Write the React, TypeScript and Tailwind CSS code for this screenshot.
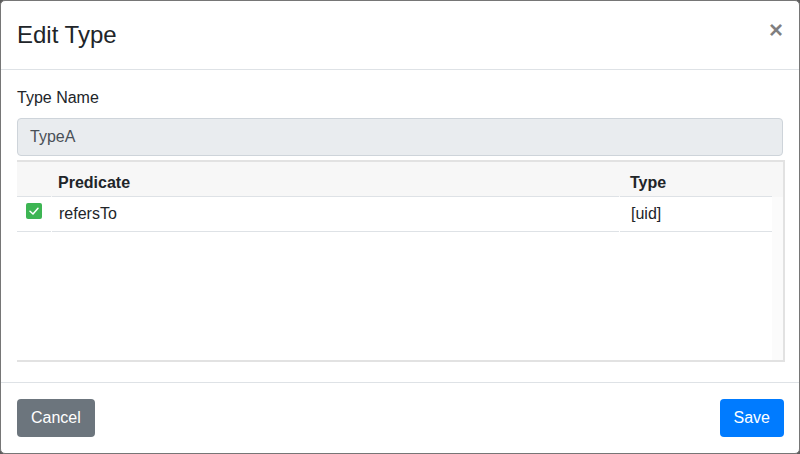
import React from "react";

const font = { fontFamily: '"Liberation Sans", Arial, sans-serif' };

function CheckIcon() {
  return (
    <div className="w-4 h-4 rounded-[2px] bg-[#3db553] flex items-center justify-center">
      <svg width="14" height="14" viewBox="0 0 14 14" fill="none">
        <path d="M3 7.2 L6 10 L11 4.2" stroke="white" strokeWidth="1.5" strokeLinecap="round" strokeLinejoin="round" />
      </svg>
    </div>
  );
}

export default function App() {
  return (
    <div className="w-[800px] h-[454px] bg-[#5b5b5b]" style={font}>
      <div className="h-full border border-[#767676] rounded-[5px] bg-white flex flex-col text-[#212529]">
        {/* header */}
        <div className="flex items-start justify-between px-4 pt-4 pb-4 border-b border-[#dee2e6]">
          <h5 className="text-2xl leading-9 font-normal">Edit Type</h5>
          <button className="text-[24px] leading-none font-bold text-black/50 mt-px">×</button>
        </div>

        {/* body */}
        <div className="flex-1 px-4 pt-4">
          <label className="block text-base leading-6 mb-2">Type Name</label>
          <div className="h-[38px] px-3 flex items-center bg-[#e9ecef] border border-[#ced4da] rounded text-base text-[#495057]">
            TypeA
          </div>

          <div className="mt-1 -mr-[2px] h-[202px] border-2 border-l-0 border-[#e2e2e2] flex">
            <div className="flex-1 flex flex-col">
              <div className="flex h-[35px] bg-[#f7f7f7] font-bold text-base leading-6">
                <div className="w-[34px] mr-px border-b border-[#dee2e6]" />
                <div className="flex-1 mr-px border-b border-[#dee2e6] pl-[6px] pt-[9px]">Predicate</div>
                <div className="w-[152px] border-b border-[#dee2e6] pl-[10px] pt-[9px]">Type</div>
              </div>
              <div className="flex h-[35px] text-base leading-6">
                <div className="w-[34px] mr-px border-b border-[#dee2e6] pl-[9px] pt-[6px]">
                  <CheckIcon />
                </div>
                <div className="flex-1 mr-px border-b border-[#dee2e6] pl-[7px] pt-[5px]">refersTo</div>
                <div className="w-[152px] border-b border-[#dee2e6] pl-[11px] pt-[5px]">[uid]</div>
              </div>
            </div>
            <div className="w-[11px] flex flex-col">
              <div className="h-[35px] bg-[#f7f7f7]" />
              <div className="flex-1 bg-[#fbfbfb]" />
            </div>
          </div>
        </div>

        {/* footer */}
        <div className="flex items-center justify-between px-4 py-4 border-t border-[#dee2e6]">
          <button className="h-[38px] px-[14px] rounded bg-[#6c757d] text-white text-base">Cancel</button>
          <button className="h-[38px] px-[14px] -mr-px rounded bg-[#007bff] text-white text-base">Save</button>
        </div>
      </div>
    </div>
  );
}
